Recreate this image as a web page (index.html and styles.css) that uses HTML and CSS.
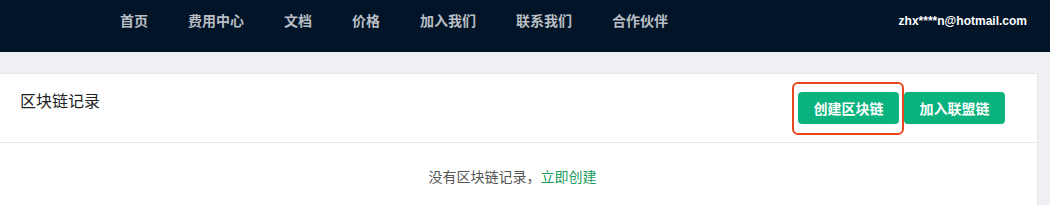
FILE: index.html
```html
<!DOCTYPE html>
<html lang="zh">
<head>
<meta charset="utf-8">
<title>区块链记录</title>
<link rel="stylesheet" href="styles.css">
</head>
<body>
<header class="topbar">
  <nav class="nav">
    <a class="nav-item">首页</a>
    <a class="nav-item">费用中心</a>
    <a class="nav-item">文档</a>
    <a class="nav-item">价格</a>
    <a class="nav-item">加入我们</a>
    <a class="nav-item">联系我们</a>
    <a class="nav-item">合作伙伴</a>
  </nav>
  <div class="user">zhx****n@hotmail.com</div>
</header>
<main class="main">
  <section class="card">
    <div class="card-head">
      <h2 class="card-title">区块链记录</h2>
      <div class="actions">
        <span class="highlight"><button class="btn">创建区块链</button></span>
        <button class="btn">加入联盟链</button>
      </div>
    </div>
    <div class="card-body">
      <p class="empty">没有区块链记录，<a class="link">立即创建</a></p>
    </div>
  </section>
</main>
</body>
</html>
```

FILE: styles.css
```css
* { box-sizing: border-box; }
html, body { margin: 0; padding: 0; }
body {
  background: #eef0f3;
  font-family: "Liberation Sans", "Noto Sans CJK SC", sans-serif;
  width: 1050px;
  height: 205px;
  overflow: hidden;
}
.topbar {
  height: 52px;
  background: #021427;
  display: flex;
  align-items: flex-start;
  justify-content: space-between;
  padding: 12px 23px 0 120px;
}
.nav {
  display: flex;
  gap: 40px;
}
.nav-item {
  color: #b9bec4;
  font-size: 14px;
  font-weight: bold;
  line-height: 18px;
  text-decoration: none;
}
.user {
  color: #ffffff;
  font-size: 12px;
  font-weight: bold;
  line-height: 18px;
}
.main {
  padding: 21px 12px 0 0;
}
.card {
  background: #ffffff;
  border: 1px solid #e6e7ea;
  border-left: none;
  height: 140px;
}
.card-head {
  height: 69px;
  border-bottom: 1px solid #e4e5e8;
  display: flex;
  align-items: center;
  justify-content: space-between;
  padding: 0 32px 0 20px;
}
.card-title {
  align-self: flex-start;
  margin: 18px 0 0 0;
  font-size: 16px;
  font-weight: normal;
  color: #222;
  line-height: 20px;
}
.actions {
  display: flex;
  align-items: center;
  gap: 5px;
}
.highlight {
  display: flex;
  padding: 8px 3px 9px 4px;
  border: 2px solid #e8471c;
  border-radius: 6px;
  margin: -10px -5px -11px -6px;
}
.btn {
  width: 101px;
  height: 32px;
  border: none;
  border-radius: 4px;
  background: #0ab27e;
  color: #fff;
  font-family: "Liberation Sans", "Noto Sans CJK SC", sans-serif;
  font-size: 14px;
  font-weight: bold;
  padding: 0;
}
.card-body {
  display: flex;
  justify-content: center;
  padding-top: 24px;
}
.empty {
  margin: 0 0 0 -12px;
  font-size: 14px;
  color: #555;
  line-height: 20px;
}
.link {
  color: #1a9a5c;
  text-decoration: none;
}
```
